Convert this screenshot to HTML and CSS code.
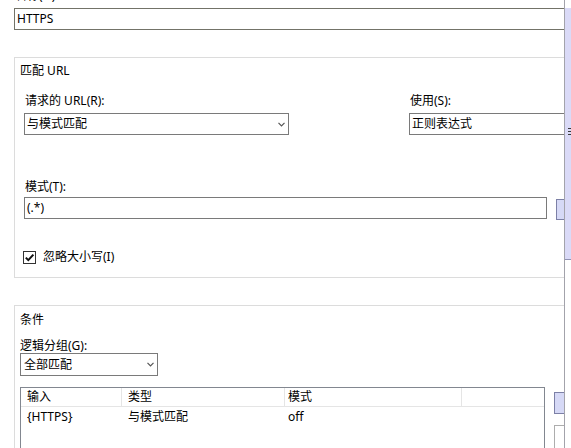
FILE: index.html
```html
<!DOCTYPE html>
<html lang="zh-CN">
<head>
<meta charset="utf-8">
<title>编辑入站规则</title>
<link rel="stylesheet" href="styles.css">
</head>
<body>
<div class="screen">
  <div class="main">
    <div class="cut-label">名称(N):</div>
    <div class="field top-field">HTTPS</div>

    <section class="group group-match">
      <div class="group-title">匹配 URL</div>
      <div class="row-two">
        <div class="col-left">
          <div class="label label-a">请求的 URL(R):</div>
          <div class="select select-url">
            <span>与模式匹配</span>
            <svg class="chev" width="7" height="5" viewBox="0 0 7 5"><polyline points="0.5,0.8 3.5,3.8 6.5,0.8" fill="none" stroke="#555" stroke-width="1.2"/></svg>
          </div>
        </div>
        <div class="col-right">
          <div class="label label-a">使用(S):</div>
          <div class="field use-field">正则表达式</div>
        </div>
      </div>
      <div class="label label-pattern">模式(T):</div>
      <div class="pattern-row">
        <div class="field pattern-field">(.*)</div>
        <div class="btn-lav btn-test"></div>
      </div>
      <div class="check-row">
        <span class="checkbox">
          <svg width="11" height="11" viewBox="0 0 11 11"><path d="M1.8 5.6 L4.3 8.1 L9.4 2.6" fill="none" stroke="#111" stroke-width="2"/></svg>
        </span>
        <span>忽略大小写(I)</span>
      </div>
    </section>

    <section class="group group-cond">
      <div class="group-title">条件</div>
      <div class="label label-group">逻辑分组(G):</div>
      <div class="select select-group">
        <span>全部匹配</span>
        <svg class="chev" width="7" height="5" viewBox="0 0 7 5"><polyline points="0.5,0.8 3.5,3.8 6.5,0.8" fill="none" stroke="#555" stroke-width="1.2"/></svg>
      </div>
      <div class="list-row">
        <div class="listview">
          <div class="lv-head">
            <div class="lv-cell c1">输入</div>
            <div class="lv-cell c2">类型</div>
            <div class="lv-cell c3">模式</div>
            <div class="lv-cell c4"></div>
          </div>
          <div class="lv-row">
            <div class="lv-cell c1">{HTTPS}</div>
            <div class="lv-cell c2">与模式匹配</div>
            <div class="lv-cell c3">off</div>
          </div>
        </div>
        <div class="side-btns">
          <div class="btn-lav btn-add"></div>
          <div class="btn-plain"></div>
        </div>
      </div>
    </section>
  </div>
  <div class="rail">
    <div class="rail-panel">
      <div class="grip"></div>
    </div>
  </div>
</div>
</body>
</html>
```

FILE: styles.css
```css
* {
  box-sizing: border-box;
}

body {
  margin: 0;
  background: #fff;
  color: #000;
  font-family: "Noto Sans", "Noto Sans CJK SC", sans-serif;
  font-size: 12px;
  line-height: 16px;
}

.screen {
  display: flex;
  width: 571px;
  height: 448px;
  overflow: hidden;
}

.main {
  flex: none;
  width: 564px;
  height: 448px;
  overflow: hidden;
  padding-left: 14px;
}

.cut-label {
  margin-top: -12px;
  height: 16px;
  padding-left: 1px;
  white-space: nowrap;
}

.field {
  height: 22px;
  border: 1px solid #7a7a7a;
  line-height: 20px;
  padding-left: 2px;
  white-space: nowrap;
  background: #fff;
}

.top-field {
  width: 580px;
  margin-top: 4px;
  border-color: #737368;
}

.group {
  width: 600px;
  border: 1px solid #dcdcdc;
  padding-left: 5px;
}

.group-title {
  height: 16px;
  white-space: nowrap;
}

.label {
  height: 16px;
  white-space: nowrap;
  padding-left: 1px;
}

/* ---- 匹配 URL ---- */
.group-match {
  margin-top: 27px;
  height: 221px;
  padding-top: 5px;
}

.row-two {
  display: flex;
  gap: 120px;
  margin-top: 14px;
  padding-left: 4px;
}

.col-left {
  width: 265px;
}

.col-right {
  width: 200px;
}

.label-a {
  margin-bottom: 4px;
}

.select {
  display: flex;
  align-items: center;
  justify-content: space-between;
  height: 22px;
  border: 1px solid #7a7a7a;
  padding: 0 3px 0 2px;
  white-space: nowrap;
  background: #fff;
}

.chev {
  display: block;
}

.use-field {
  width: 200px;
}

.label-pattern {
  margin-top: 44px;
  margin-left: 4px;
}

.pattern-row {
  display: flex;
  align-items: flex-start;
  gap: 9px;
  margin-top: 2px;
  padding-left: 4px;
}

.pattern-field {
  flex: none;
  width: 523px;
}

.btn-lav {
  flex: none;
  width: 40px;
  background: #d6d9f6;
  border: 1px solid #7c80a6;
}

.btn-test {
  height: 21px;
  margin-top: 2px;
}

.check-row {
  display: flex;
  align-items: center;
  gap: 7px;
  margin-top: 29px;
  margin-left: 3px;
  height: 16px;
  white-space: nowrap;
}

.checkbox {
  display: flex;
  align-items: center;
  justify-content: center;
  width: 13px;
  height: 13px;
  border: 1px solid #333;
  background: #fff;
}

/* ---- 条件 ---- */
.group-cond {
  margin-top: 27px;
  height: 200px;
  padding-top: 6px;
}

.label-group {
  margin-top: 10px;
  height: 15px;
  padding-left: 0;
}

.select-group {
  width: 138px;
  height: 23px;
  padding-left: 3px;
}

.list-row {
  display: flex;
  align-items: flex-start;
  gap: 9px;
  margin-top: 11px;
}

.listview {
  flex: none;
  width: 525px;
  height: 120px;
  border: 1px solid #828790;
  background: #fff;
}

.lv-head {
  display: flex;
  height: 19px;
  border-bottom: 1px solid #e5e5e5;
}

.lv-head .lv-cell {
  border-right: 1px solid #e5e5e5;
}

.lv-head .c4 {
  border-right: none;
}

.lv-row {
  display: flex;
  height: 20px;
}

.lv-cell {
  flex: none;
  line-height: 18px;
  padding-left: 6px;
  white-space: nowrap;
}

.lv-row .lv-cell {
  line-height: 20px;
}

.c1 {
  width: 101px;
}

.c2 {
  width: 163px;
}

.c3 {
  width: 177px;
  padding-left: 3px;
}

.c4 {
  flex: 1;
}

.side-btns {
  display: flex;
  flex-direction: column;
  gap: 11px;
  margin-top: 5px;
}

.btn-add {
  height: 22px;
}

.btn-plain {
  width: 40px;
  height: 40px;
  border: 1px solid #adadad;
  background: #fff;
}

/* ---- right rail ---- */
.rail {
  flex: none;
  width: 7px;
  height: 448px;
  border-left: 1px solid #a3a3ab;
}

.rail-panel {
  margin-top: 8px;
  height: 252px;
  background: #dadaf7;
  border-bottom: 1px solid #9092b4;
  padding-top: 120px;
}

.grip {
  width: 4px;
  height: 8px;
  margin-left: 3px;
  background: repeating-linear-gradient(to bottom, #3a3a3a 0, #3a3a3a 1px, transparent 1px, transparent 3px);
}
```
